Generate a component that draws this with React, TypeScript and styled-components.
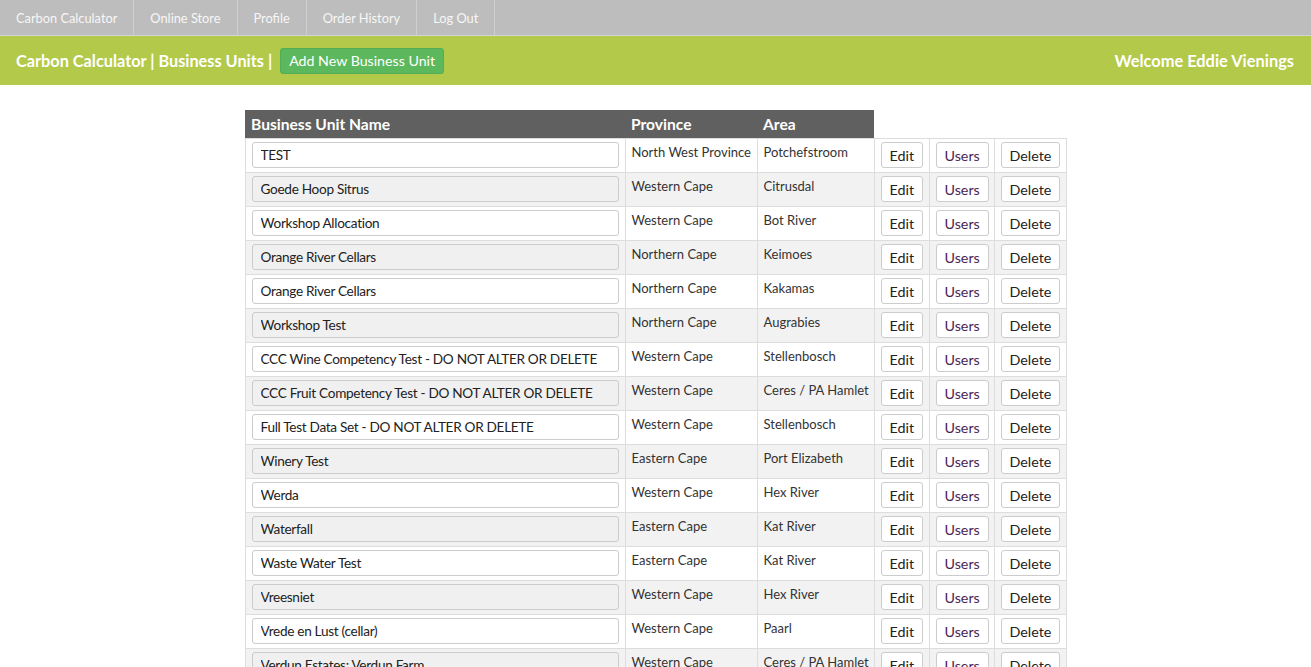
import React from 'react';
import styled, { createGlobalStyle } from 'styled-components';

const GlobalStyle = createGlobalStyle`
  html, body {
    margin: 0;
    padding: 0;
    background: #ffffff;
    font-family: 'Lato', 'Open Sans', 'Liberation Sans', sans-serif;
    color: #333333;
  }
`;

const TopNav = styled.nav`
  display: flex;
  height: 35px;
  background: #bdbdbd;
  border-bottom: 1px solid #d4d4d4;
`;

const NavItem = styled.a`
  display: flex;
  align-items: center;
  padding: 0 16px;
  color: #f7f7f7;
  font-size: 12.8px;
  text-decoration: none;
  border-right: 1px solid #d0d0d0;
`;

const HeaderBar = styled.header`
  display: flex;
  align-items: center;
  justify-content: space-between;
  height: 49px;
  padding: 0 17px 0 16px;
  background: #b3c94a;
  color: #ffffff;
`;

const HeaderLeft = styled.div`
  display: flex;
  align-items: center;
  gap: 8px;
`;

const HeaderTitle = styled.h1`
  margin: 0;
  font-size: 16.3px;
  font-weight: 700;
`;

const AddButton = styled.button`
  height: 26px;
  padding: 0 8px;
  border: 1px solid #53ad53;
  border-radius: 3px;
  background: #5cb85c;
  color: #ffffff;
  font-family: inherit;
  font-size: 14.2px;
`;

const Welcome = styled.div`
  font-size: 16.4px;
  font-weight: 700;
`;

const Main = styled.main`
  display: flex;
  justify-content: center;
  padding-top: 25px;
`;

const Table = styled.table`
  border-collapse: collapse;
  table-layout: fixed;
  width: 821px;
`;

const HeadCell = styled.th<{ $dark?: boolean; $w: number }>`
  width: ${p => p.$w}px;
  height: 28px;
  padding: 0 6px;
  text-align: left;
  font-size: 15.6px;
  font-weight: 700;
  color: #ffffff;
  background: ${p => (p.$dark ? '#606060' : 'transparent')};
  vertical-align: middle;
  box-sizing: border-box;
`;

const Row = styled.tr<{ $alt: boolean }>`
  background: ${p => (p.$alt ? '#f2f2f2' : '#ffffff')};
`;

const Cell = styled.td`
  padding: 3px 6px 4px;
  border: 1px solid #dddddd;
  font-size: 13px;
  line-height: 18px;
  color: #333333;
  vertical-align: top;
  white-space: nowrap;
  overflow: hidden;
`;

const TextCell = styled(Cell)`
  padding-top: 4px;
`;

const ButtonCell = styled(Cell)`
  text-align: center;
`;

const NameInput = styled.input<{ $alt: boolean }>`
  display: block;
  box-sizing: border-box;
  width: 100%;
  height: 26px;
  padding: 1px 8px 0;
  border: 1px solid #cccccc;
  border-radius: 3px;
  background: ${p => (p.$alt ? '#f0f0f0' : '#ffffff')};
  color: #222222;
  font-family: inherit;
  font-size: 13.6px;
  letter-spacing: -0.3px;
  outline: none;
`;

const RowButton = styled.button<{ $tone?: 'link' }>`
  display: inline-block;
  vertical-align: top;
  height: 26px;
  padding: 1px 8px 0;
  border: 1px solid #cccccc;
  border-radius: 3px;
  background: #ffffff;
  color: ${p => (p.$tone === 'link' ? '#4b1f55' : '#222222')};
  font-family: inherit;
  font-size: 14.3px;
`;

const units = [
  ['TEST', 'North West Province', 'Potchefstroom'],
  ['Goede Hoop Sitrus', 'Western Cape', 'Citrusdal'],
  ['Workshop Allocation', 'Western Cape', 'Bot River'],
  ['Orange River Cellars', 'Northern Cape', 'Keimoes'],
  ['Orange River Cellars', 'Northern Cape', 'Kakamas'],
  ['Workshop Test', 'Northern Cape', 'Augrabies'],
  ['CCC Wine Competency Test - DO NOT ALTER OR DELETE', 'Western Cape', 'Stellenbosch'],
  ['CCC Fruit Competency Test - DO NOT ALTER OR DELETE', 'Western Cape', 'Ceres / PA Hamlet'],
  ['Full Test Data Set - DO NOT ALTER OR DELETE', 'Western Cape', 'Stellenbosch'],
  ['Winery Test', 'Eastern Cape', 'Port Elizabeth'],
  ['Werda', 'Western Cape', 'Hex River'],
  ['Waterfall', 'Eastern Cape', 'Kat River'],
  ['Waste Water Test', 'Eastern Cape', 'Kat River'],
  ['Vreesniet', 'Western Cape', 'Hex River'],
  ['Vrede en Lust (cellar)', 'Western Cape', 'Paarl'],
  ['Verdun Estates: Verdun Farm', 'Western Cape', 'Ceres / PA Hamlet'],
];

const navLinks = ['Carbon Calculator', 'Online Store', 'Profile', 'Order History', 'Log Out'];

const App: React.FC = () => {
  return (
    <>
      <GlobalStyle />
      <TopNav>
        {navLinks.map(link => (
          <NavItem key={link} href="#">{link}</NavItem>
        ))}
      </TopNav>
      <HeaderBar>
        <HeaderLeft>
          <HeaderTitle>Carbon Calculator | Business Units |</HeaderTitle>
          <AddButton>Add New Business Unit</AddButton>
        </HeaderLeft>
        <Welcome>Welcome Eddie Vienings</Welcome>
      </HeaderBar>
      <Main>
        <Table>
          <thead>
            <tr>
              <HeadCell $dark $w={380}>Business Unit Name</HeadCell>
              <HeadCell $dark $w={132}>Province</HeadCell>
              <HeadCell $dark $w={117}>Area</HeadCell>
              <HeadCell $w={55} />
              <HeadCell $w={65} />
              <HeadCell $w={72} />
            </tr>
          </thead>
          <tbody>
            {units.map(([name, province, area], i) => {
              const alt = i % 2 === 1;
              return (
                <Row key={i} $alt={alt}>
                  <Cell>
                    <NameInput $alt={alt} defaultValue={name} />
                  </Cell>
                  <TextCell>{province}</TextCell>
                  <TextCell>{area}</TextCell>
                  <ButtonCell><RowButton>Edit</RowButton></ButtonCell>
                  <ButtonCell><RowButton $tone="link">Users</RowButton></ButtonCell>
                  <ButtonCell><RowButton>Delete</RowButton></ButtonCell>
                </Row>
              );
            })}
          </tbody>
        </Table>
      </Main>
    </>
  );
};

export default App;
